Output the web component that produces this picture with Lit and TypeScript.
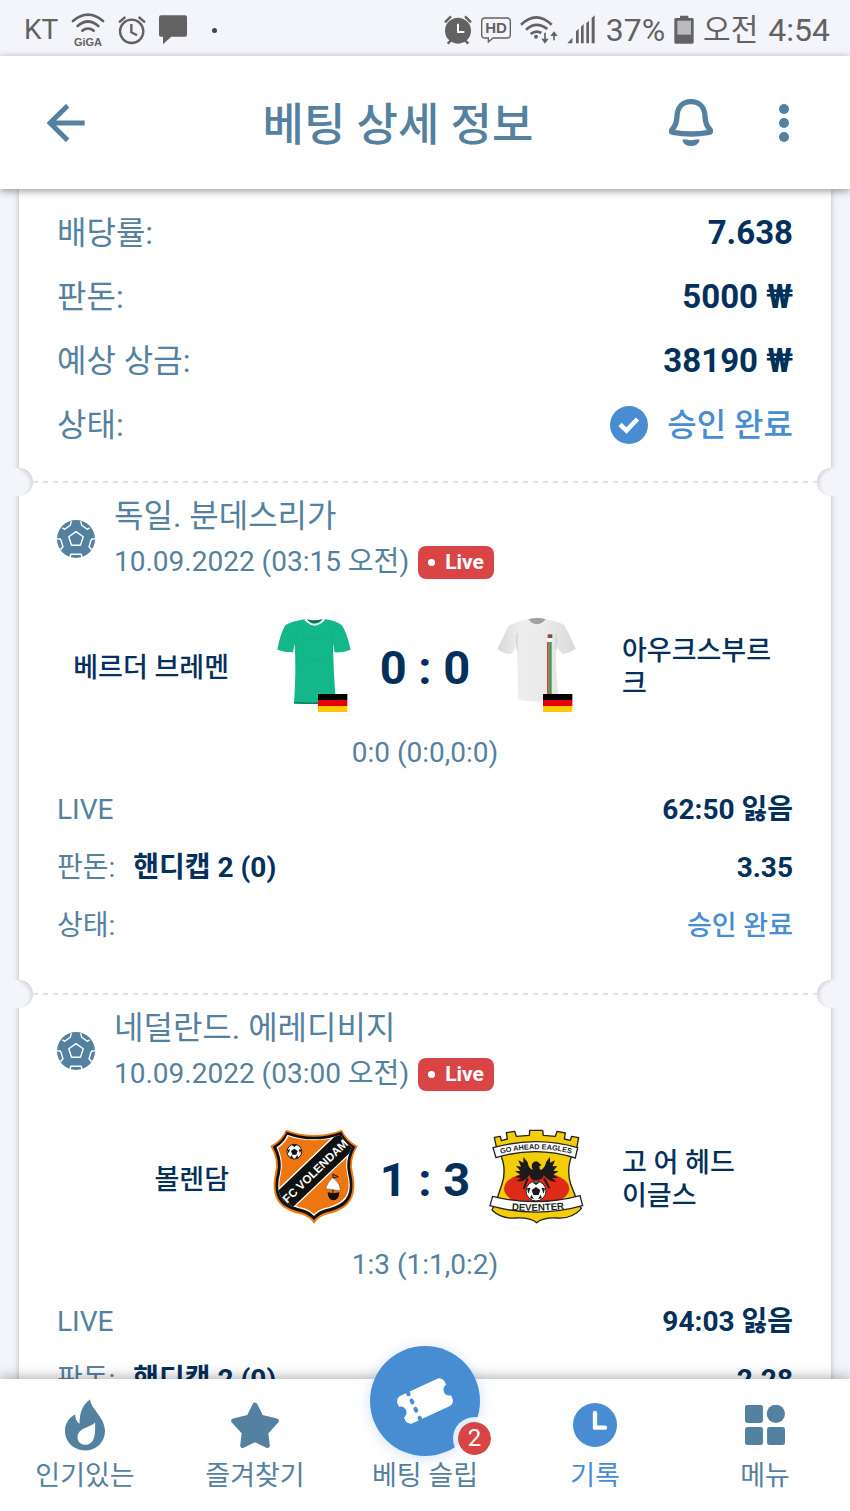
import { LitElement, html, css, svg, nothing } from "lit";
import { customElement, property } from "lit/decorators.js";

interface Match {
  league: string;
  date: string;
  home: string;
  away: string;
  homeArt: unknown;
  awayArt: unknown;
  score: string;
  periods: string;
  moment: string;
  pick: string;
  odds: string;
}

const flag = (x: number) => svg`
  <rect x=${x} y="312" width="88" height="18" fill="#000"/>
  <rect x=${x} y="330" width="88" height="18" fill="#e3000b"/>
  <rect x=${x} y="348" width="88" height="18" fill="#ffc800"/>`;

const greenShirt = html`<svg class="crest" viewBox="48 81 288 288" aria-hidden="true">
  <path d="M164 88 Q191 112 223 87 Q258 92 275 105 Q290 125 302 179 Q278 189 254 187 L249 160 Q250 240 258 340 Q195 343 132 341 Q139 240 134 162 L129 187 Q104 187 82 179 Q91 130 106 106 Q122 94 164 88Z" fill="#14b78a"/>
  <path d="M139 120 Q136 170 140 230 M246 120 Q249 170 245 235 M150 140 Q190 150 232 138 M170 210 Q200 215 232 205" fill="none" stroke="#0da378" stroke-width="3" opacity=".3"/>
  <path d="M170 88 Q192 94 219 87 Q208 101 193 101 Q178 100 170 88Z" fill="#0b7357"/>
  <path d="M165 88 Q180 104 194 104 Q211 103 223 87" fill="none" stroke="#f4f8ee" stroke-width="6"/>
  <path d="M132 338 Q195 341 250 339" fill="none" stroke="#077a58" stroke-width="4"/>
  ${flag(204)}
</svg>`;

const whiteShirt = html`<svg class="crest" viewBox="714 81 288 288" aria-hidden="true">
  <defs><linearGradient id="cloth" x1="0" x2="1">
    <stop offset="0" stop-color="#d8d8d8"/><stop offset=".3" stop-color="#eeeeee"/>
    <stop offset=".65" stop-color="#e9e9e9"/><stop offset="1" stop-color="#dadada"/>
  </linearGradient></defs>
  <path d="M834 88 Q862 82 889 88 Q925 96 942 104 Q955 125 977 176 Q960 189 936 192 L918 165 Q916 240 925 325 Q865 344 804 328 Q803 240 802 165 L783 193 Q757 190 742 177 Q765 130 775 108 Q790 97 834 88Z" fill="url(#cloth)"/>
  <path d="M802 130 Q799 150 802 180 M918 130 Q921 150 918 180" fill="none" stroke="#cbcbcb" stroke-width="3"/>
  <path d="M834 88 Q861 80 888 88 Q880 102 861 103 Q842 102 834 88Z" fill="#a2a2a2"/>
  <path d="M834 89 Q843 106 861 106 Q880 105 888 89" fill="none" stroke="#f1f1f1" stroke-width="4"/>
  <rect x="893" y="133" width="7" height="11" fill="#c33"/><rect x="900" y="133" width="7" height="11" fill="#28733b"/>
  <rect x="889" y="145" width="18" height="10" fill="#f8f8f8"/>
  <rect x="891" y="156" width="5" height="156" fill="#c9473d"/><rect x="896" y="156" width="3" height="156" fill="#6b5a45"/><rect x="899" y="156" width="6" height="156" fill="#38a04b"/>
  ${flag(879)}
</svg>`;

const volendam = html`<svg class="crest" viewBox="18 57 288 288" aria-hidden="true">
  <defs><clipPath id="shield"><path d="M82 74 Q120 88 162 88 Q205 88 242 74 Q252 98 275 112 Q256 150 264 190 Q280 250 248 276 Q226 292 196 298 Q174 305 162 318 Q150 305 128 298 Q98 292 76 276 Q44 250 60 190 Q68 150 49 112 Q72 98 82 74Z"/></clipPath></defs>
  <path d="M78 59 Q120 75 162 75 Q205 75 246 59 Q258 88 293 108 Q268 150 279 190 Q294 260 256 290 Q232 307 202 313 Q176 320 162 341 Q148 320 122 313 Q92 307 68 290 Q30 260 45 190 Q56 150 31 108 Q66 88 78 59Z" fill="#ef7d12"/>
  <path d="M80 65 Q120 80 162 80 Q205 80 244 65 Q256 93 286 110 Q263 150 273 190 Q288 257 253 285 Q230 301 200 307 Q176 314 162 331 Q148 314 124 307 Q94 301 71 285 Q36 257 51 190 Q61 150 38 110 Q68 93 80 65Z" fill="#111"/>
  <g clip-path="url(#shield)">
    <rect x="18" y="57" width="288" height="288" fill="#fff"/>
    <path d="M85 79 Q120 91 162 91 Q205 91 239 79 Q250 101 270 114 Q253 150 261 190 Q276 248 245 272 Q222 288 194 294 Q172 301 162 313 Q152 301 130 294 Q102 288 79 272 Q48 248 63 190 Q71 150 54 114 Q75 101 85 79Z" fill="#ee7611"/>
    <path d="M20 272 L248 54 L300 102 L80 312Z" fill="#111" stroke="#fff" stroke-width="4"/>
  </g>
  <text class="club" transform="translate(165 183) rotate(-44)" text-anchor="middle" y="13" font-size="35" fill="#fff">FC VOLENDAM</text>
  <circle cx="103" cy="125" r="22" fill="#fff" stroke="#111" stroke-width="3"/>
  <path d="M103 116l10 7-4 11H97l-4-11zM95 104h16l-8 7zM82 119l8-1-4 12zM124 119l-8-1 4 12zM91 143l3-8 6 9zM115 143l-3-8-6 9z" fill="#111"/>
  <path d="M219 191v58M219 193l16 7-16 4" stroke="#111" stroke-width="3" fill="none"/>
  <path d="M217 203 Q201 219 197 236 L241 242 Q241 220 222 206Z" fill="#fff" stroke="#754216" stroke-width="1.500"/>
  <path d="M203 247 Q220 252 238 247 Q237 270 220 271 Q204 270 203 247Z" fill="#111"/>
</svg>`;

const eagles = html`<svg class="crest" viewBox="24 57 288 288" aria-hidden="true">
  <defs>
    <clipPath id="body"><path d="M58 125 H280 Q257 175 272 222 Q285 260 304 296 Q276 328 230 324 Q190 322 170 338 Q150 322 108 324 Q64 328 36 300 Q55 260 66 222 Q78 175 58 125Z"/></clipPath>
    <path id="arch" d="M52 134 Q168 101 284 134"/>
    <path id="sag" d="M82 299 Q170 308 266 295"/>
  </defs>
  <path d="M43 82 L61 79 L64 92 L82 87 L79 68 L104 64 L109 79 L148 76 L149 61 L188 61 L190 76 L226 79 L231 64 L256 69 L253 87 L271 91 L275 79 L296 83 L288 125 H52Z" fill="#f3cd08" stroke="#222" stroke-width="4" stroke-linejoin="round"/>
  <g clip-path="url(#body)">
    <rect x="24" y="110" width="288" height="235" fill="#f3cd08"/>
    <ellipse cx="170" cy="236" rx="98" ry="50" fill="#df2a18"/>
  </g>
  <path d="M58 125 Q82 175 66 222 Q55 260 36 300 Q64 328 108 324 Q150 322 170 338 Q190 322 230 324 Q276 328 304 296 Q285 260 272 222 Q257 175 280 125" fill="none" stroke="#222" stroke-width="4"/>
  <path d="M168 211 Q150 211 149 194 Q130 220 109 213 L124 204 L105 202 L122 194 L105 184 L121 182 L108 168 L123 170 L115 151 L130 158 L130 141 L143 157 Q145 174 158 180 Q151 164 161 156 Q171 150 178 160 L185 166 L178 168 Q178 178 183 180 Q196 172 198 157 L210 141 L210 158 L225 151 L218 169 L232 168 L220 182 L236 184 L219 194 L235 203 L216 204 L229 215 Q210 218 191 195 Q190 210 168 211Z" fill="#1b1b1b"/>
  <path d="M143 205l-12 32M192 205l16 30" stroke="#1b1b1b" stroke-width="6"/>
  <circle cx="168" cy="243" r="30" fill="#fff" stroke="#222" stroke-width="3"/>
  <path d="M168 231l13 9-5 15h-16l-5-15zM156 217h24l-12 8zM141 235l11-2-7 18zM195 235l-11-2 7 18zM150 265l4-11 8 13zM186 265l-4-11-8 13z" fill="#1b1b1b"/>
  <path d="M39 113 Q168 77 293 113 L286 144 Q168 106 48 143Z" fill="#fff" stroke="#222" stroke-width="4"/>
  <path d="M38 259 Q168 292 300 257 L308 287 Q168 326 30 287Z" fill="#fff" stroke="#222" stroke-width="4"/>
  <text class="club" font-size="22" fill="#222"><textPath href="#arch" startOffset="50%" text-anchor="middle">GO AHEAD EAGLES</textPath></text>
  <text class="club" font-size="29" fill="#222"><textPath href="#sag" startOffset="50%" text-anchor="middle">DEVENTER</textPath></text>
</svg>`;

const ball = html`<svg width="38" height="38" viewBox="0 0 38 38" aria-hidden="true">
  <circle cx="19" cy="19" r="19" fill="#5581a1"/>
  <g fill="none" stroke="#fff" stroke-width="1.400" stroke-linejoin="round">
    <path d="M19 11.600L26.200 16.800L23.500 25.300H14.500L11.800 16.800Z"/>
    <path d="M5.500 7.800L7.700 9.300L13.300 5.300L14.300 1.200M32.500 7.800L30.300 9.300L24.700 5.300L23.700 1.200"/>
    <path d="M0 18.600L3.600 19.200L6 26.800L3.200 30M38 18.600L34.400 19.200L32 26.800L34.800 30"/>
    <path d="M12.800 38L13.800 34.300H24.200L25.200 38"/>
  </g>
</svg>`;

const base = css`
  :host { display: block; box-sizing: border-box; }
  * { box-sizing: border-box; }
  svg { display: block; flex: none; }
`;

@customElement("status-bar")
class StatusBar extends LitElement {
  static styles = [base, css`
    :host {
      display: flex; align-items: center; justify-content: space-between;
      height: 56px; padding: 4px 20px 0 24px; background: #f4f5fa; color: #626262;
      font-size: 32px; line-height: 40px;
    }
    .side { display: flex; align-items: center; gap: 9px; white-space: nowrap; }
    .left { gap: 13px; }
    .carrier { font-size: 28px; }
    .dot { width: 5px; height: 5px; margin-left: 12px; border-radius: 50%; background: #444; }
    .clock { display: flex; gap: 10px; }
    .ampm { font-size: 30px; }
    .brand { font: 700 33px "Liberation Sans", sans-serif; }
    .hd { font: 700 45px "Liberation Sans", sans-serif; }
  `];
  render() {
    return html`
      <div class="side left">
        <span class="carrier">KT</span>
        <svg width="34" height="38" viewBox="216 32 102 114" aria-hidden="true">
          <g fill="none" stroke="#626262" stroke-width="8" stroke-linecap="round"><path d="M222 62 Q267 24 312 62"/><path d="M236 77 Q267 50 298 77"/><path d="M250 91 Q267 78 284 91"/></g>
          <text class="brand" x="267" y="137" text-anchor="middle" fill="#626262">GiGA</text>
        </svg>
        <svg width="28" height="30" viewBox="353 43 84 90" aria-hidden="true">
          <g fill="none" stroke="#626262" stroke-width="7"><circle cx="394" cy="92" r="35"/><path d="M393 70v25l17 9"/><path d="M356 65l19-16M434 65l-19-16"/></g>
        </svg>
        <svg width="28" height="30" viewBox="480 44 84 90" aria-hidden="true"><path d="M486 45H558Q564 45 564 51V103Q564 109 558 109H517L492 132V109H486Q480 109 480 103V51Q480 45 486 45Z" fill="#626262"/></svg>
        <span class="dot"></span>
      </div>
      <div class="side">
        <svg width="28" height="30" viewBox="52 43 84 90" aria-hidden="true">
          <circle cx="94" cy="90" r="39" fill="#626262"/><path d="M94 69v25h19" fill="none" stroke="#fff" stroke-width="6"/>
          <path d="M55 65l18-18M133 65l-18-18M63 129l10-10M125 129l-10-10" stroke="#626262" stroke-width="7"/>
        </svg>
        <svg width="30" height="26" viewBox="156 50 90 78" aria-hidden="true">
          <path d="M168 53H234Q244 53 244 63V103Q244 113 234 113H192L178 125V113H168Q158 113 158 103V63Q158 53 168 53Z" fill="none" stroke="#626262" stroke-width="4"/>
          <text class="hd" x="201" y="99" text-anchor="middle" fill="#626262">HD</text>
        </svg>
        <svg width="38" height="30" viewBox="274 40 114 90" aria-hidden="true">
          <g fill="none" stroke="#626262" stroke-width="8"><path d="M277 69Q323 25 369 69"/><path d="M292 84Q323 56 356 82"/><path d="M306 97Q322 84 338 94"/></g>
          <circle cx="322" cy="105" r="6" fill="#626262"/>
          <path d="M349 93v20M376 116V98" stroke="#626262" stroke-width="5"/><path d="M338 111h22l-11 15zM365 103h22l-11-14z" fill="#626262"/>
        </svg>
        <svg width="30" height="30" viewBox="403 42 90 90" aria-hidden="true"><path d="M404 127l15-17v17zM430 127V91l8-8v44zM445 127V77l8-8v58zM461 127V67l8-8v68zM477 127V51l9-8v84z" fill="#626262"/></svg>
        <span>37%</span>
        <svg width="20" height="30" viewBox="737 43 60 90" aria-hidden="true"><path d="M755 45h25v7h12q4 0 4 4v69q0 4-4 4h-50q-4 0-4-4V56q0-4 4-4h13z" fill="#626262"/><path d="M747 60h41v42h-41z" fill="#b9babd"/></svg>
        <span class="clock"><span class="ampm">오전</span><span>4:54</span></span>
      </div>`;
  }
}

@customElement("page-header")
class PageHeader extends LitElement {
  static styles = [base, css`
    :host {
      display: flex; align-items: center; height: 133px; background: #fff; color: #5581a1;
      box-shadow: 0 2px 8px rgba(0, 0, 0, 0.4); position: relative; z-index: 2;
    }
    h1 { flex: 1; margin: 0; padding-top: 6px; font-size: 45px; font-weight: 500; line-height: 60px; text-align: center; white-space: nowrap; }
    button { display: grid; place-items: center; height: 80px; padding: 0; border: 0; background: none; color: inherit; }
    .edge { width: 132px; }
    .bell { width: 54px; }
  `];
  render() {
    return html`
      <button class="edge" aria-label="뒤로">
        <svg width="38" height="38" viewBox="140 311 114 114"><path d="M202 316L149 368L202 420M147 368H253" fill="none" stroke="#5581a1" stroke-width="15"/></svg>
      </button>
      <h1>베팅 상세 정보</h1>
      <button class="bell" aria-label="알림">
        <svg width="44" height="48" viewBox="727 299 132 144">
          <path d="M793 307C767 307 752 325 751 351C750 374 744 382 737 390C732 395 733 398 739 399Q793 409 847 399C853 398 854 395 849 390C842 382 836 374 835 351C834 325 819 307 793 307Z" fill="none" stroke="#5581a1" stroke-width="16"/>
          <path d="M772 420Q793 425 815 420Q820 420 818 426Q813 440 793 440Q773 440 768 426Q766 420 772 420Z" fill="#5581a1"/>
        </svg>
      </button>
      <button class="edge" aria-label="더 보기">
        <svg width="10" height="38" viewBox="0 0 10 38"><g fill="#5581a1"><circle cx="5" cy="5" r="5"/><circle cx="5" cy="19" r="5"/><circle cx="5" cy="33" r="5"/></g></svg>
      </button>`;
  }
}

@customElement("match-card")
class MatchCard extends LitElement {
  @property({ attribute: false }) match!: Match;
  static styles = [base, css`
    .tear { position: relative; height: 2px; margin: 0 14px; background: repeating-linear-gradient(90deg, #dfe0ee 0 5px, transparent 5px 10px); }
    .tear::before, .tear::after { content: ""; position: absolute; top: -13px; width: 28px; height: 28px; border-radius: 50%; }
    .tear::before { left: -28px; background: linear-gradient(90deg, #f4f5fa 50%, transparent 50%), radial-gradient(circle at 11px 16px, #f4f5fa 12px, #d3d4d9 18px); }
    .tear::after { right: -28px; background: linear-gradient(270deg, #f4f5fa 50%, transparent 50%), radial-gradient(circle at 17px 16px, #f4f5fa 12px, #d3d4d9 18px); }
    .body { padding: 10px 38px 38px; }
    header { display: flex; align-items: center; gap: 19px; color: #5581a1; }
    h2 { margin: 0; font-size: 32px; font-weight: 400; line-height: 46px; }
    .when { display: flex; align-items: center; gap: 9px; font-size: 28px; line-height: 46px; }
    .live { display: flex; align-items: center; gap: 10px; height: 33px; padding: 0 10px; border-radius: 8px; background: #d94545; color: #fff; font-size: 21px; font-weight: 700; }
    .live::before { content: ""; width: 7px; height: 7px; border-radius: 50%; background: #fff; }
    .teams { display: grid; grid-template-columns: 1fr 96px 126px 96px 1fr; align-items: center; margin-top: 32px; color: #04305c; }
    .name { padding-top: 6px; font-size: 27px; font-weight: 500; line-height: 33px; word-break: keep-all; overflow-wrap: anywhere; }
    .home { padding-right: 37px; text-align: right; }
    .away { padding-left: 38px; }
    .crest { width: 96px; height: 96px; }
    .club { font-family: "Liberation Sans", sans-serif; font-weight: 700; }
    .score { padding-top: 6px; font-size: 47px; font-weight: 700; line-height: 56px; text-align: center; white-space: nowrap; }
    .periods { margin: 20px 0 8px; color: #5581a1; font-size: 28px; line-height: 40px; text-align: center; }
    dl { margin: 0; font-size: 28px; line-height: 58px; }
    .row { display: flex; }
    dt { color: #5581a1; }
    dd { margin: 0 0 0 auto; color: #04305c; font-weight: 700; }
    .pick { margin-left: 18px; }
    .ok { color: #488dd2; font-size: 27px; font-weight: 500; }
  `];
  render() {
    const m = this.match;
    return html`
      <div class="tear"></div>
      <article class="body">
        <header>
          ${ball}
          <div>
            <h2>${m.league}</h2>
            <div class="when"><time>${m.date}</time><span class="live">Live</span></div>
          </div>
        </header>
        <div class="teams">
          <span class="name home">${m.home}</span>
          ${m.homeArt}
          <span class="score">${m.score}</span>
          ${m.awayArt}
          <span class="name away">${m.away}</span>
        </div>
        <p class="periods">${m.periods}</p>
        <dl>
          <div class="row"><dt>LIVE</dt><dd>${m.moment}</dd></div>
          <div class="row"><dt>판돈:</dt><dd class="pick">${m.pick}</dd><dd>${m.odds}</dd></div>
          <div class="row"><dt>상태:</dt><dd class="ok">승인 완료</dd></div>
        </dl>
      </article>`;
  }
}

@customElement("tab-bar")
class TabBar extends LitElement {
  static styles = [base, css`
    :host { height: 132px; background: #fff; box-shadow: 0 -2px 12px rgba(0, 0, 0, 0.3); position: relative; z-index: 2; }
    nav { display: grid; grid-template-columns: repeat(5, 1fr); height: 100%; }
    a { position: relative; display: flex; flex-direction: column; align-items: center; color: #5581a1; font-size: 27px; line-height: 34px; text-decoration: none; white-space: nowrap; }
    .icon { display: grid; place-items: center; height: 60px; margin: 16px 0 4px; }
    .active { color: #488dd2; }
    .slip {
      position: absolute; top: -33px; left: 50%; margin-left: -55px; width: 110px; height: 110px; border-radius: 50%;
      display: grid; place-items: center; background: #488dd2; box-shadow: 0 2px 14px rgba(72, 141, 210, 0.25);
    }
    .space { height: 80px; }
    .count {
      position: absolute; right: -16px; bottom: -4px; width: 43px; height: 43px; border: 5px solid rgba(255, 255, 255, 0.85); border-radius: 50%;
      background: #d94545; background-clip: padding-box; color: #fff; font-size: 24px; line-height: 33px; text-align: center;
    }
  `];
  render() {
    return html`<nav>
      <a href="#hot"><span class="icon"><svg width="40" height="52" viewBox="198 208 121 156"><path d="M274 208C274 235 319 262 319 304C319 338 293 363 259 363C224 363 198 338 198 303C198 281 210 263 229 254C229 264 231 274 242 282C242 250 249 227 274 208ZM289 278C278 294 236 294 236 323C236 337 247 346 259 346C284 346 291 324 289 278Z" fill="#5581a1" fill-rule="evenodd"/></svg></span>인기있는</a>
      <a href="#favorites"><span class="icon"><svg width="48" height="47" viewBox="693 212 144 140"><path d="M765 221L783 257L829 268L797 303L802 342L765 324L728 342L733 303L701 268L747 257Z" fill="#5581a1" stroke="#5581a1" stroke-width="15" stroke-linejoin="round"/></svg></span>즐겨찾기</a>
      <a href="#slip">
        <span class="slip">
          <svg width="62" height="52" viewBox="0 0 62 52">
            <g transform="rotate(-25 31 26)">
              <rect x="5" y="11" width="52" height="30" rx="6" fill="#fff"/>
              <circle cx="4" cy="26" r="6" fill="#488dd2"/><circle cx="58" cy="26" r="6" fill="#488dd2"/>
              <path d="M19 10v3M19 20v2M19 29v2M19 39v3" stroke="#488dd2" stroke-width="4" stroke-linecap="round"/>
            </g>
          </svg>
          <span class="count">2</span>
        </span>
        <span class="space"></span>베팅 슬립
      </a>
      <a href="#history" class="active" aria-current="page"><span class="icon"><svg width="44" height="44" viewBox="444 219 132 132"><circle cx="510" cy="285" r="66" fill="#488dd2"/><path d="M510 249V293H540" fill="none" stroke="#fff" stroke-width="13" stroke-linecap="round" stroke-linejoin="round"/></svg></span>기록</a>
      <a href="#menu"><span class="icon"><svg width="40" height="40" viewBox="961 227 118 118"><g fill="#5581a1"><rect x="961" y="227" width="53" height="53" rx="7"/><circle cx="1052" cy="253" r="27"/><rect x="961" y="292" width="53" height="53" rx="7"/><rect x="1026" y="292" width="53" height="53" rx="7"/></g></svg></span>메뉴</a>
    </nav>`;
  }
}

@customElement("app-root")
class AppRoot extends LitElement {
  static styles = [base, css`
    :host {
      display: flex; flex-direction: column; height: 100vh; background: #f4f5fa;
      font-family: Roboto, "Noto Sans CJK KR", sans-serif;
    }
    main { flex: 1; min-height: 0; padding: 0 19px; overflow-x: hidden; overflow-y: auto; scrollbar-width: none; }
    .ticket { background: #fff; box-shadow: 0 0 6px rgba(0, 0, 0, 0.25); }
    dl { margin: 0; padding: 12px 38px 24px; font-size: 32px; line-height: 64px; }
    .row { display: flex; justify-content: space-between; }
    dt { color: #5581a1; }
    dd { display: flex; align-items: center; gap: 19px; margin: 0; color: #04305c; }
    .sum { font-size: 33px; font-weight: 700; }
    .ok { color: #488dd2; font-weight: 500; }
  `];

  private matches: Match[] = [
    { league: "독일. 분데스리가", date: "10.09.2022 (03:15 오전)", home: "베르더 브레멘", away: "아우크스부르크", homeArt: greenShirt, awayArt: whiteShirt, score: "0 : 0", periods: "0:0 (0:0,0:0)", moment: "62:50 잃음", pick: "핸디캡 2 (0)", odds: "3.35" },
    { league: "네덜란드. 에레디비지", date: "10.09.2022 (03:00 오전)", home: "볼렌담", away: "고 어 헤드 이글스", homeArt: volendam, awayArt: eagles, score: "1 : 3", periods: "1:3 (1:1,0:2)", moment: "94:03 잃음", pick: "핸디캡 2 (0)", odds: "2.28" },
  ];

  private row(label: string, value: string, approved = false) {
    return html`<div class="row"><dt>${label}</dt><dd class=${approved ? "ok" : "sum"}>
      ${approved ? html`<svg width="38" height="38" viewBox="0 0 38 38" aria-hidden="true"><circle cx="19" cy="19" r="19" fill="#488dd2"/><path d="M10 18.500L16.500 24.500L27.500 13" fill="none" stroke="#fff" stroke-width="4.500"/></svg>` : nothing}
      <span>${value}</span></dd></div>`;
  }

  render() {
    return html`
      <status-bar></status-bar>
      <page-header></page-header>
      <main>
        <section class="ticket">
          <dl>
            ${this.row("배당률:", "7.638")}
            ${this.row("판돈:", "5000 ₩")}
            ${this.row("예상 상금:", "38190 ₩")}
            ${this.row("상태:", "승인 완료", true)}
          </dl>
          ${this.matches.map((m) => html`<match-card .match=${m}></match-card>`)}
        </section>
      </main>
      <tab-bar></tab-bar>`;
  }
}
